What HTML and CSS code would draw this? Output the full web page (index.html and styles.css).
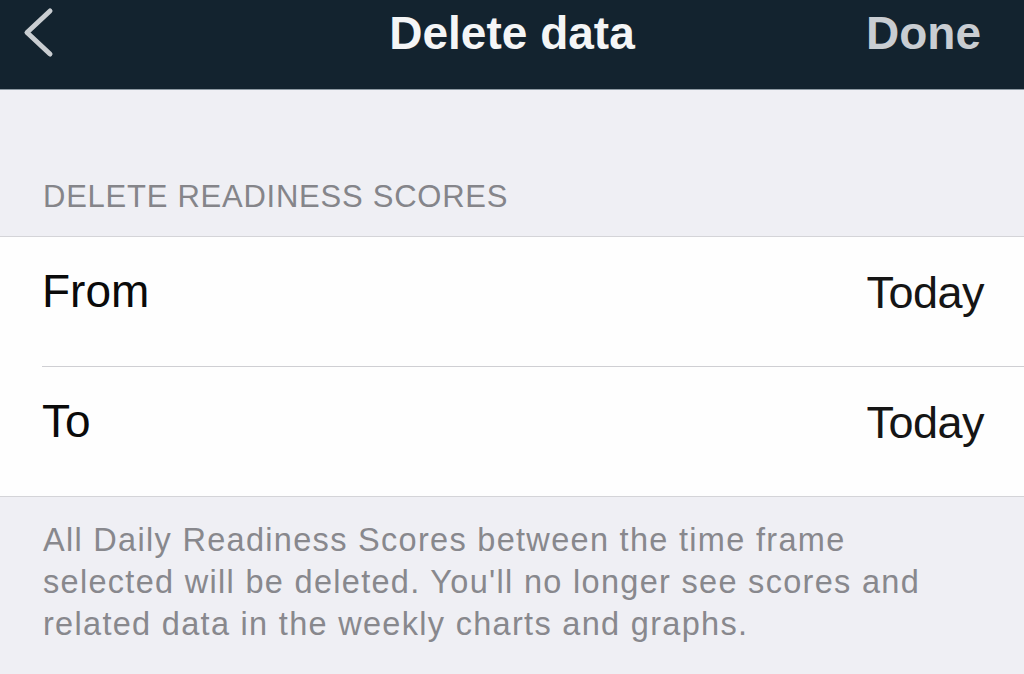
FILE: index.html
```html
<!DOCTYPE html>
<html>
<head>
<meta charset="utf-8">
<link rel="stylesheet" href="styles.css">
</head>
<body>
<header class="navbar">
  <div class="nav-left">
    <svg class="back" width="70" height="70" viewBox="0 0 70 70">
      <path d="M50 11 L27 32.5 L50 54" fill="none" stroke="#c9cdd1" stroke-width="5" stroke-linecap="round" stroke-linejoin="round"/>
    </svg>
  </div>
  <div class="nav-title">Delete data</div>
  <div class="nav-right">Done</div>
</header>
<main class="content">
  <div class="section-header">DELETE READINESS SCORES</div>
  <div class="list">
    <div class="row">
      <span class="label">From</span>
      <span class="value">Today</span>
    </div>
    <div class="row">
      <span class="label">To</span>
      <span class="value">Today</span>
    </div>
  </div>
  <p class="footer-note">All Daily Readiness Scores between the time frame selected will be deleted. You'll no longer see scores and related data in the weekly charts and graphs.</p>
</main>
</body>
</html>
```

FILE: styles.css
```css
html, body {
  margin: 0;
  padding: 0;
}
body {
  width: 1024px;
  height: 674px;
  overflow: hidden;
  background: #efeff4;
  font-family: "Liberation Sans", Arial, sans-serif;
}
.navbar {
  height: 89px;
  background: #13232f;
  border-bottom: 1px solid #8e9aa3;
  display: grid;
  grid-template-columns: 1fr auto 1fr;
  align-items: start;
}
.nav-left {
  display: flex;
}
.back {
  display: block;
}
.nav-title {
  text-align: center;
  color: #f4f5f6;
  font-weight: bold;
  font-size: 46px;
  line-height: 66px;
}
.nav-right {
  text-align: right;
  padding-right: 43px;
  color: #c9cdd2;
  font-weight: bold;
  font-size: 46px;
  line-height: 66px;
}
.content {
  padding-top: 86px;
}
.section-header {
  padding-left: 43px;
  color: #85858a;
  font-size: 31px;
  letter-spacing: 0.75px;
  line-height: 42px;
  height: 60px;
}
.list {
  background: #fefefe;
  border-top: 1px solid #d4d4d8;
  border-bottom: 1px solid #d4d4d8;
  padding-left: 42px;
}
.row {
  height: 129px;
  display: flex;
  justify-content: space-between;
  align-items: flex-start;
  padding-right: 40px;
  box-sizing: border-box;
  padding-top: 30px;
}
.row + .row {
  border-top: 1px solid #cfcfd3;
  height: 130px;
}
.label {
  font-size: 46px;
  color: #0a0a0a;
  line-height: 48px;
}
.value {
  font-size: 45px;
  color: #151515;
  line-height: 52px;
  letter-spacing: -0.5px;
}
.footer-note {
  margin: 0;
  padding: 22px 70px 0 43px;
  color: #88888d;
  font-size: 32.5px;
  line-height: 42px;
  letter-spacing: 1.3px;
}
```
